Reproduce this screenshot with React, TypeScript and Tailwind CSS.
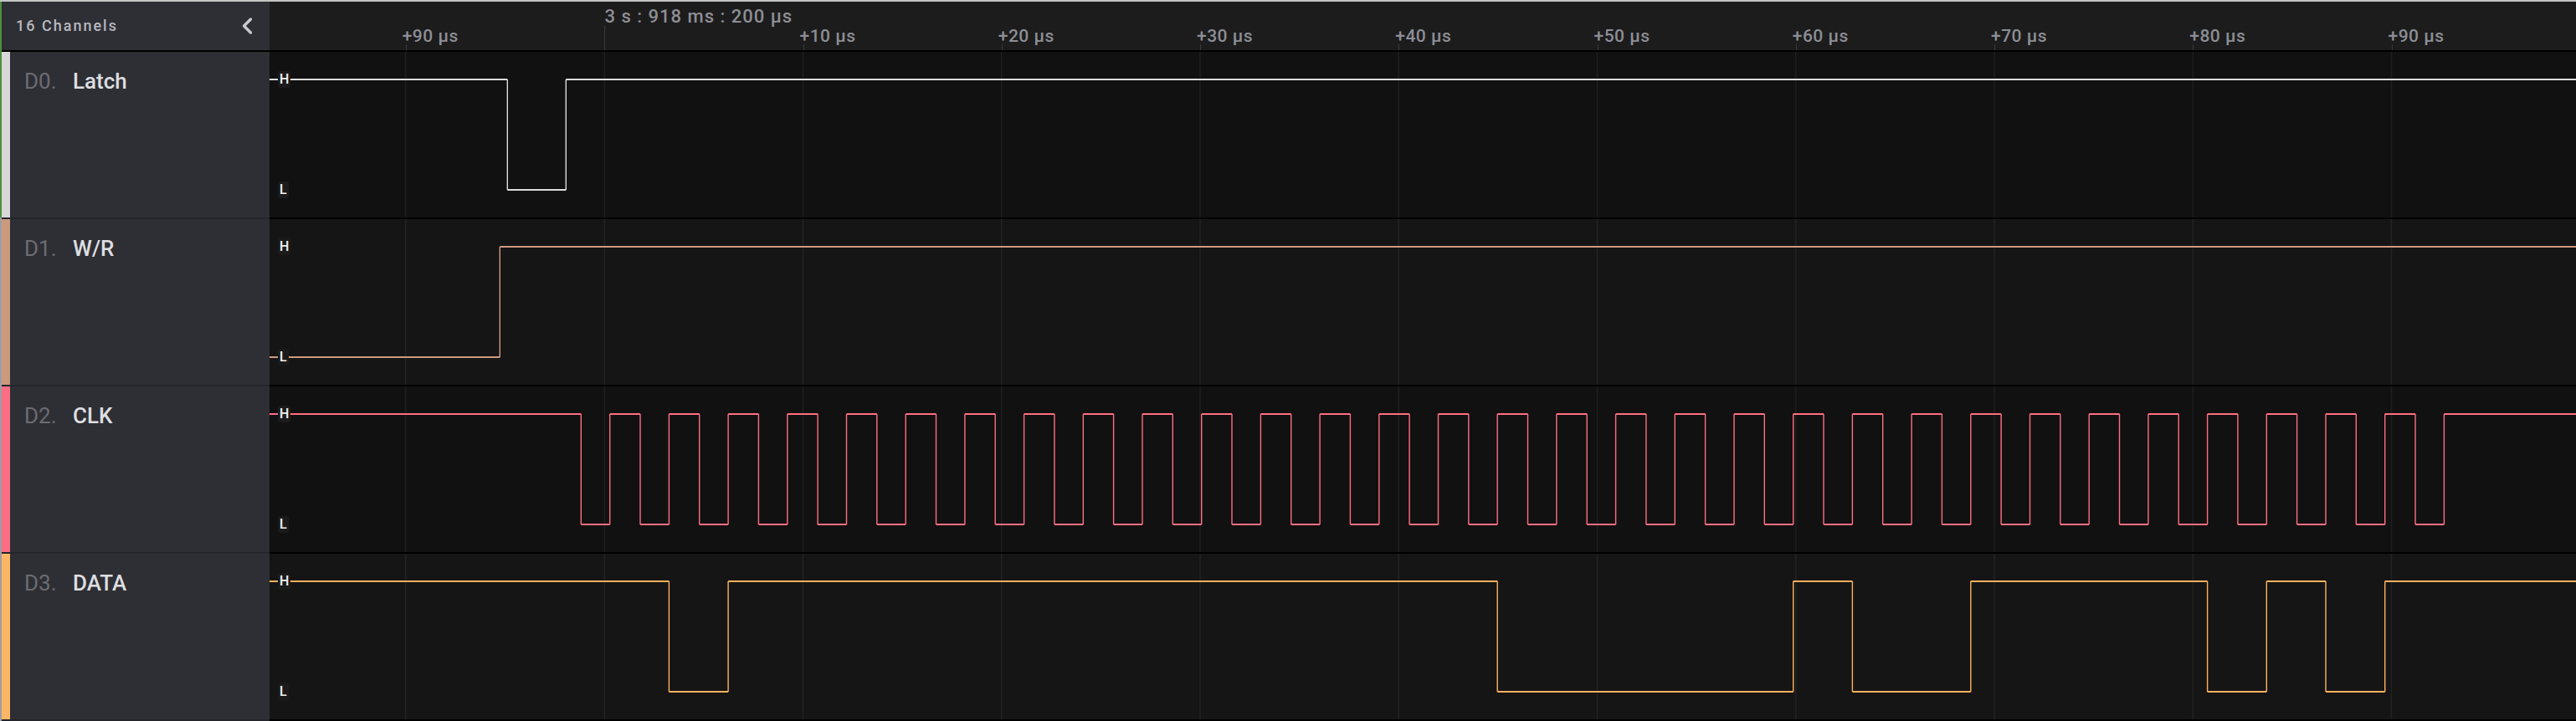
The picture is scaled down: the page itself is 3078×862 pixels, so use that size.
import React from "react";

const WAVE_W = 2756;
const ROW_H = 198;
const HY = 33;
const LY = 165;

// grid positions, local to the wave area (x - 322)
const GRID = [162.7, 400.3, ...Array.from({ length: 9 }, (_, k) => 637.5 + 237.25 * k)];
const TICKS = [
  { x: 162.7, label: "+90 µs" },
  ...Array.from({ length: 9 }, (_, k) => ({ x: 637.5 + 237.25 * k, label: `+${(k + 1) * 10} µs` })),
];

const clkEdges: number[] = [];
for (let k = 0; k < 32; k++) clkEdges.push(372.3 + 70.7 * k, 406.7 + 70.7 * k);
const dataEdges = [1, 2, 15, 20, 21, 23, 27, 28, 29, 30].map((k) => 406.7 + 70.7 * k);

type Channel = {
  id: string;
  name: string;
  stroke: string;
  bar: string;
  bg: string;
  grid: string;
  start: number;
  edges: number[];
};

const channels: Channel[] = [
  { id: "D0.", name: "Latch", stroke: "#dcdcdc", bar: "bg-[#d8d8d8]", bg: "bg-[#111111]", grid: "#1e1e1e", start: 1, edges: [284.3, 354.3] },
  { id: "D1.", name: "W/R", stroke: "#cf9a7f", bar: "bg-[#c99a7e]", bg: "bg-[#151515]", grid: "#222222", start: 0, edges: [275.3] },
  { id: "D2.", name: "CLK", stroke: "#ff6e82", bar: "bg-[#fd6e84]", bg: "bg-[#111111]", grid: "#1e1e1e", start: 1, edges: clkEdges },
  { id: "D3.", name: "DATA", stroke: "#ffb15f", bar: "bg-[#fdb665]", bg: "bg-[#151515]", grid: "#222222", start: 1, edges: dataEdges },
];

function wave(start: number, edges: number[]) {
  let lvl = start;
  let x = 0;
  let h = "";
  let v = "";
  for (const e of edges) {
    h += `M${x} ${lvl ? HY : LY}H${e}`;
    v += `M${e} ${HY}V${LY}`;
    x = e;
    lvl = 1 - lvl;
  }
  h += `M${x} ${lvl ? HY : LY}H${WAVE_W}`;
  return { h, v };
}

function Badge({ text, top }: { text: string; top: string }) {
  return (
    <div
      className={`absolute left-[10px] ${top} h-[20px] px-[2px] rounded-[3px] bg-[#1b1b1b] flex items-center justify-center text-[16px] font-medium leading-none text-[#f2f2f2]`}
    >
      {text}
    </div>
  );
}

function Row({ ch }: { ch: Channel }) {
  const { h, v } = wave(ch.start, ch.edges);
  return (
    <div className="flex flex-col">
      <div className="flex h-[198px]">
        <div className={`w-[10px] ${ch.bar}`} />
        <div className="w-[310px] bg-[#2e2f35] pl-[17px] pt-[22px] flex items-start text-[26px] leading-none">
          <span className="w-[58px] text-[#6b6c72]">{ch.id}</span>
          <span className="font-medium text-[#dedee0]">{ch.name}</span>
        </div>
        <div className={`relative flex-1 ${ch.bg}`}>
          <svg width={WAVE_W} height={ROW_H} className="block">
            {GRID.map((x) => (
              <line key={x} x1={x} x2={x} y1={0} y2={ROW_H} stroke={ch.grid} strokeWidth={1.6} />
            ))}
            <path d={h} stroke={ch.stroke} strokeWidth={2} fill="none" />
            <path d={v} stroke={ch.stroke} strokeWidth={1.4} fill="none" />
          </svg>
          <Badge text="H" top="top-[23px]" />
          <Badge text="L" top="top-[155px]" />
        </div>
      </div>
      <div className="flex h-[2px]">
        <div className="w-[320px] bg-[#24252a]" />
        <div className="flex-1 bg-black" />
      </div>
    </div>
  );
}

function Header() {
  return (
    <div className="flex flex-col">
      <div className="flex h-[58px]">
        <div className="w-[320px] bg-[#2e2f35] flex items-center justify-between pl-[17px] pr-[20px]">
          <span className="text-[18px] font-medium leading-none tracking-[2px] text-[#b7b8bf]">16 Channels</span>
          <svg width="14" height="22" viewBox="0 0 14 22" className="block">
            <polyline points="11.5,3 3.5,11 11.5,19" fill="none" stroke="#c9c9ce" strokeWidth="3.4" strokeLinecap="round" strokeLinejoin="round" />
          </svg>
        </div>
        <div className="relative flex-1 bg-[#1c1c1c] text-[#8d8e95] font-medium leading-none">
          <div className="absolute left-[400px] top-[29px] bottom-0 w-px bg-[#3a3a3c]" />
          <span className="absolute left-[400.5px] top-[7px] text-[22px] tracking-[1px] whitespace-nowrap">
            3 s : 918 ms : 200 µs
          </span>
          {TICKS.map((t) => (
            <React.Fragment key={t.label + t.x}>
              <div className="absolute top-[51px] bottom-0 w-px bg-[#3a3a3c]" style={{ left: t.x }} />
              <span className="absolute top-[31px] text-[21px] tracking-[0.5px] whitespace-nowrap" style={{ left: t.x - 4 }}>
                {t.label}
              </span>
            </React.Fragment>
          ))}
        </div>
      </div>
      <div className="h-[2px] bg-black" />
    </div>
  );
}

export default function App() {
  return (
    <div className="w-[3078px] h-[862px] overflow-hidden bg-[#111111] font-['Roboto',sans-serif] flex flex-col">
      <div className="h-[2px] bg-[#c4c4c4]" />
      <div className="flex flex-1">
        <div className="w-[2px] flex flex-col">
          <div className="h-[258px] bg-[#4d8f3b]" />
          <div className="flex-1 bg-[#9d9da3]" />
        </div>
        <div className="flex-1 flex flex-col">
          <Header />
          {channels.map((ch) => (
            <Row key={ch.id} ch={ch} />
          ))}
        </div>
      </div>
    </div>
  );
}
